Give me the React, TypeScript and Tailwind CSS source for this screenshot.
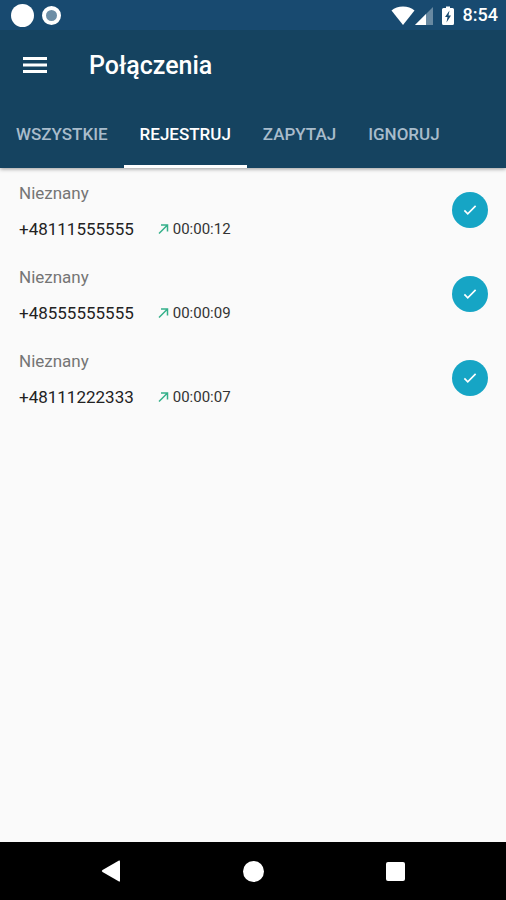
import { useState } from "react";
import clsx from "clsx";

const tabs = ["Wszystkie", "Rejestruj", "Zapytaj", "Ignoruj"];

const calls = [
  { name: "Nieznany", number: "+48111555555", duration: "00:00:12" },
  { name: "Nieznany", number: "+48555555555", duration: "00:00:09" },
  { name: "Nieznany", number: "+48111222333", duration: "00:00:07" },
];

const StatusBar = () => (
  <div className="flex h-[30px] items-center justify-between bg-[#184a70] pr-2 pl-[11px] text-white">
    <div className="flex items-center gap-2">
      <span className="size-[23px] rounded-full bg-white" />
      <span className="size-[19px] rounded-full border-4 border-white bg-[#6d8ea6]" />
    </div>
    <div className="flex items-center gap-[9px]">
      <div className="flex items-end">
        <svg viewBox="0 0 24 19" className="h-[19px] w-6" fill="currentColor" aria-hidden="true">
          <path d="M12 19 0.5 4.5C3.5 2 7.5 0.5 12 0.5S20.5 2 23.5 4.5Z" />
        </svg>
        <svg viewBox="0 0 18 18" className="h-[18px] w-[18px]" fill="currentColor" aria-hidden="true">
          <path d="M0 18 18 0V18Z" opacity="0.35" />
          <path d="M0 18 11 7V18Z" />
        </svg>
      </div>
      <svg viewBox="0 0 12 19" className="h-[19px] w-3" aria-hidden="true">
        <path d="M4 0.5H8V2H10.5Q12 2 12 3.5V17.5Q12 19 10.5 19H1.5Q0 19 0 17.5V3.5Q0 2 1.5 2H4Z" fill="currentColor" />
        <path d="M7.5 4.5 3 11H5.5L4.5 16.5 9 9.5H6.5Z" fill="#184a70" />
      </svg>
      <span className="text-lg font-medium">8:54</span>
    </div>
  </div>
);

const Check = () => (
  <svg viewBox="0 0 24 24" className="size-[18px]" fill="none" stroke="currentColor" strokeWidth="2.2" aria-hidden="true">
    <path d="m4.5 12.5 4.5 4.5L19.5 6.5" />
  </svg>
);

const Arrow = () => (
  <svg viewBox="0 0 12 12" className="size-3" fill="none" stroke="#35b08a" strokeWidth="1.5" aria-hidden="true">
    <path d="M1 10.5 9.5 2M3 2H9.5V8.5" />
  </svg>
);

export default function App() {
  const [active, setActive] = useState("Rejestruj");

  return (
    <div className="flex min-h-screen flex-col bg-[#fafafa] font-['Roboto',sans-serif]">
      <header className="z-10 bg-[#154360] shadow-[0_1px_4px_rgba(0,0,0,0.4)]">
        <StatusBar />
        <div className="flex h-[72px] items-center gap-[42px] px-[23px] text-white">
          <button type="button" aria-label="Menu">
            <svg viewBox="0 0 24 18" className="h-[18px] w-6" fill="currentColor" aria-hidden="true">
              <path d="M0 0H24V3H0ZM0 6.5H24V9.5H0ZM0 13H24V16H0Z" />
            </svg>
          </button>
          <h1 className="text-[25px] leading-8 font-medium">Połączenia</h1>
        </div>
        <nav className="flex h-[66px]">
          {tabs.map((tab) => (
            <button
              key={tab}
              type="button"
              onClick={() => setActive(tab)}
              className={clsx(
                "border-y-3 border-t-transparent px-4 text-[17px] font-medium uppercase",
                active === tab ? "border-b-white text-white" : "border-b-transparent text-[#a9bccb]",
              )}
            >
              {tab}
            </button>
          ))}
        </nav>
      </header>

      <main className="flex-1">
        <ul>
          {calls.map((call) => (
            <li key={call.number} className="flex h-[84px] items-center justify-between pr-[18px] pl-[19px]">
              <div className="pt-0.5">
                <p className="text-[17px] leading-9 text-[#757575]">{call.name}</p>
                <p className="flex items-center leading-9">
                  <span className="text-[17px] text-[#222222]">{call.number}</span>
                  <span className="ml-6 flex items-center gap-[3px] text-[15px] text-[#333333]">
                    <Arrow />
                    {call.duration}
                  </span>
                </p>
              </div>
              <button
                type="button"
                aria-label="Rejestruj"
                className="flex size-9 items-center justify-center rounded-full bg-[#16a5c5] text-white"
              >
                <Check />
              </button>
            </li>
          ))}
        </ul>
      </main>

      <footer className="grid h-[58px] grid-cols-3 bg-black px-10 text-white">
        <button type="button" aria-label="Wstecz" className="flex items-center justify-center">
          <svg viewBox="0 0 20 22" className="h-[22px] w-5" fill="currentColor" aria-hidden="true">
            <path d="M18 0.5Q19 0 19 1.5V20.5Q19 22 18 21.5L1.5 12Q0 11 1.5 10Z" />
          </svg>
        </button>
        <button type="button" aria-label="Ekran główny" className="flex items-center justify-center">
          <span className="size-[21px] rounded-full bg-white" />
        </button>
        <button type="button" aria-label="Ostatnie" className="flex items-center justify-center">
          <span className="size-[19px] rounded-xs bg-white" />
        </button>
      </footer>
    </div>
  );
}
